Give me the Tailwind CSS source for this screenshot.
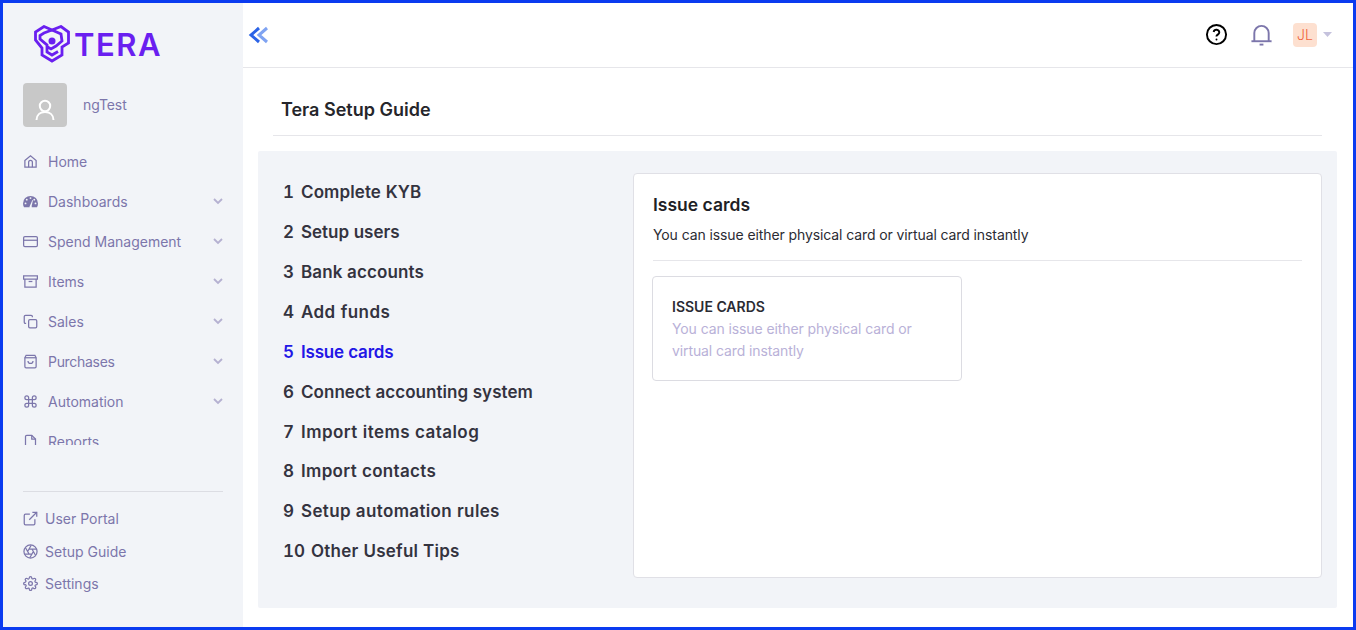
<!DOCTYPE html>
<html lang="en">
<head>
<meta charset="utf-8">
<title>Tera Setup Guide</title>
<script src="https://cdn.jsdelivr.net/npm/@tailwindcss/browser@4"></script>
</head>
<body class="font-['Inter',sans-serif]">
<div class="w-[1356px] h-[630px] border-[3px] border-[#0b3bf0] flex overflow-hidden bg-white">
  <aside class="w-[240px] h-full shrink-0 bg-[#f2f4f8] flex flex-col text-[14px] text-[#7c76ab]">
    <div class="h-[80px] shrink-0 pl-[31px] pt-[22px] flex items-start gap-[4px]">
      <svg class="w-[36px] h-[38px] shrink-0" viewBox="0 0 36 38" fill="none" stroke="#6a1ff0" stroke-width="2.800"><path d="M10 1.500 18 5 27 1.500 34.500 7V18L28 22V30L18 36 8 30V23L1.500 15V7Z"/><path d="M18 5 10 8 6 10.500V14L13 20V27L18 30 24 26.500"/><path d="M18 5 27 9 28 16 22 21 17 24 13.500 22"/><circle cx="18" cy="16" r="3.500" fill="#6a1ff0" stroke="none"/></svg>
      <span class="text-[31px] leading-[40px] font-semibold tracking-[1.5px] text-[#6a1ff0]">TERA</span>
    </div>
    <div class="h-[44px] shrink-0 ml-[20px] flex items-center gap-[16px]">
      <div class="w-[44px] h-[44px] rounded-[4px] bg-[#c8c8c8] flex items-end justify-center pb-[6px]">
        <svg class="w-[20px] h-[22px]" viewBox="0 0 20 22" fill="none" stroke="#fff" stroke-width="2"><circle cx="10" cy="7" r="5.200"/><path d="M1.500 21c0-5 3.500-8 8.500-8s8.500 3 8.500 8"/></svg>
      </div>
      <span class="pb-[2px] tracking-[-0.1px]">ngTest</span>
    </div>
    <nav class="mt-[14px] h-[304px] shrink-0 overflow-hidden">
      <a class="h-[40px] pl-[20px] pr-[19px] flex items-center gap-[10px]">
        <svg class="w-[15px] h-[15px] shrink-0" viewBox="0 0 24 24" fill="none" stroke="currentColor" stroke-width="2"><path d="M3 10.500 12 3l9 7.500V21H3Z"/><path d="M9 21v-8a3 3 0 0 1 6 0v8"/></svg>
        <span>Home</span>
      </a>
      <a class="h-[40px] pl-[20px] pr-[19px] flex items-center gap-[10px]">
        <svg class="w-[15px] h-[15px] shrink-0" viewBox="0 0 24 24" fill="currentColor"><path d="M12 3a12 12 0 0 0-12 12c0 2.200.6 4.300 1.600 6h20.800c1-1.700 1.600-3.800 1.600-6A12 12 0 0 0 12 3Z"/><g fill="#f2f4f8"><circle cx="12" cy="6.500" r="1.500"/><circle cx="6" cy="9" r="1.500"/><circle cx="18" cy="9" r="1.500"/><circle cx="4" cy="15" r="1.500"/><circle cx="20" cy="15" r="1.500"/><path d="M10.500 20 15 9.500l1 .4-2.300 9.600a2 2 0 1 1-3.200.5Z"/></g></svg>
        <span>Dashboards</span>
        <svg class="ml-auto w-[12px] h-[12px] text-[#b5b1d1]" viewBox="0 0 12 12" fill="none" stroke="currentColor" stroke-width="1.800"><path d="m2 4 4 4 4-4"/></svg>
      </a>
      <a class="h-[40px] pl-[20px] pr-[19px] flex items-center gap-[10px]">
        <svg class="w-[15px] h-[15px] shrink-0" viewBox="0 0 24 24" fill="none" stroke="currentColor" stroke-width="2"><rect x="1" y="4" width="22" height="16" rx="2"/><path d="M1 10h22"/></svg>
        <span>Spend Management</span>
        <svg class="ml-auto w-[12px] h-[12px] text-[#b5b1d1]" viewBox="0 0 12 12" fill="none" stroke="currentColor" stroke-width="1.800"><path d="m2 4 4 4 4-4"/></svg>
      </a>
      <a class="h-[40px] pl-[20px] pr-[19px] flex items-center gap-[10px]">
        <svg class="w-[15px] h-[15px] shrink-0" viewBox="0 0 24 24" fill="none" stroke="currentColor" stroke-width="2"><path d="M1 3h22v5H1Z"/><path d="M3 8v13h18V8"/><path d="M9 12h6"/></svg>
        <span>Items</span>
        <svg class="ml-auto w-[12px] h-[12px] text-[#b5b1d1]" viewBox="0 0 12 12" fill="none" stroke="currentColor" stroke-width="1.800"><path d="m2 4 4 4 4-4"/></svg>
      </a>
      <a class="h-[40px] pl-[20px] pr-[19px] flex items-center gap-[10px]">
        <svg class="w-[15px] h-[15px] shrink-0" viewBox="0 0 24 24" fill="none" stroke="currentColor" stroke-width="2"><rect x="9" y="9" width="13" height="13" rx="2"/><path d="M5 15H4a2 2 0 0 1-2-2V4a2 2 0 0 1 2-2h9a2 2 0 0 1 2 2v1"/></svg>
        <span>Sales</span>
        <svg class="ml-auto w-[12px] h-[12px] text-[#b5b1d1]" viewBox="0 0 12 12" fill="none" stroke="currentColor" stroke-width="1.800"><path d="m2 4 4 4 4-4"/></svg>
      </a>
      <a class="h-[40px] pl-[20px] pr-[19px] flex items-center gap-[10px]">
        <svg class="w-[15px] h-[15px] shrink-0" viewBox="0 0 24 24" fill="none" stroke="currentColor" stroke-width="2"><path d="M5 2h14l2 4v14a2 2 0 0 1-2 2H5a2 2 0 0 1-2-2V6Z"/><path d="M3 6h18"/><path d="M8 11a4 4 0 0 0 8 0"/></svg>
        <span class="tracking-[-0.3px]">Purchases</span>
        <svg class="ml-auto w-[12px] h-[12px] text-[#b5b1d1]" viewBox="0 0 12 12" fill="none" stroke="currentColor" stroke-width="1.800"><path d="m2 4 4 4 4-4"/></svg>
      </a>
      <a class="h-[40px] pl-[20px] pr-[19px] flex items-center gap-[10px]">
        <svg class="w-[15px] h-[15px] shrink-0" viewBox="0 0 24 24" fill="none" stroke="currentColor" stroke-width="2"><path d="M18 3a3 3 0 0 0-3 3v12a3 3 0 1 0 3-3H6a3 3 0 1 0 3 3V6a3 3 0 1 0-3 3h12a3 3 0 0 0 0-6Z"/></svg>
        <span>Automation</span>
        <svg class="ml-auto w-[12px] h-[12px] text-[#b5b1d1]" viewBox="0 0 12 12" fill="none" stroke="currentColor" stroke-width="1.800"><path d="m2 4 4 4 4-4"/></svg>
      </a>
      <a class="h-[40px] pl-[20px] pr-[19px] flex items-center gap-[10px]">
        <svg class="w-[15px] h-[15px] shrink-0" viewBox="0 0 24 24" fill="none" stroke="currentColor" stroke-width="2"><path d="M14 2H6a2 2 0 0 0-2 2v16a2 2 0 0 0 2 2h12a2 2 0 0 0 2-2V8Z"/><path d="M14 2v6h6"/></svg>
        <span>Reports</span>
      </a>
    </nav>
    <div class="mt-[46px] mx-[20px] border-t border-[#dcdde3]"></div>
    <div class="mt-[10px] mx-[20px] flex flex-col">
      <a class="h-[33px] flex items-center gap-[7px]">
        <svg class="w-[15px] h-[15px] shrink-0" viewBox="0 0 24 24" fill="none" stroke="currentColor" stroke-width="2"><path d="M19 13v7a2 2 0 0 1-2 2H4a2 2 0 0 1-2-2V7a2 2 0 0 1 2-2h7"/><path d="M15 2h7v7"/><path d="M10 14 22 2"/></svg>
        <span>User Portal</span>
      </a>
      <a class="h-[32px] flex items-center gap-[7px]">
        <svg class="w-[15px] h-[15px] shrink-0" viewBox="0 0 24 24" fill="none" stroke="currentColor" stroke-width="2"><circle cx="12" cy="12" r="10.500"/><path d="m14.300 8 5.700 9.900M9.700 8h11.500M7.400 12l5.700-9.900M9.700 16 4 6.100M14.300 16H2.800M16.600 12l-5.700 9.900"/></svg>
        <span>Setup Guide</span>
      </a>
      <a class="h-[33px] flex items-center gap-[7px]">
        <svg class="w-[15px] h-[15px] shrink-0" viewBox="0 0 24 24" fill="none" stroke="currentColor" stroke-width="2"><circle cx="12" cy="12" r="3"/><path d="M19.400 15a1.650 1.650 0 0 0 .33 1.820l.06.06a2 2 0 1 1-2.830 2.830l-.06-.06a1.650 1.650 0 0 0-2.820 1.170V21a2 2 0 1 1-4 0v-.09a1.650 1.650 0 0 0-2.820-1.170l-.06.06a2 2 0 1 1-2.830-2.830l.06-.06A1.650 1.650 0 0 0 3.090 14H3a2 2 0 1 1 0-4h.09a1.650 1.650 0 0 0 1.170-2.820l-.06-.06a2 2 0 1 1 2.830-2.830l.06.06A1.650 1.650 0 0 0 10 3.090V3a2 2 0 1 1 4 0v.09a1.650 1.650 0 0 0 2.820 1.170l.06-.06a2 2 0 1 1 2.830 2.830l-.06.06A1.650 1.650 0 0 0 20.910 10H21a2 2 0 1 1 0 4h-.09a1.650 1.650 0 0 0-1.510 1Z"/></svg>
        <span>Settings</span>
      </a>
    </div>
  </aside>

  <main class="flex-1 min-w-0 flex flex-col">
    <header class="h-[65px] shrink-0 border-b border-[#e6e6ea] flex items-center pl-[5px] pr-[21px] pb-[1px]">
      <svg class="w-[22px] h-[20px]" viewBox="0 0 22 20" fill="none" stroke-width="3"><path d="M11 3 3 10l8 7" stroke="#2b63e6"/><path d="M19 3l-8 7 8 7" stroke="#7fa3f2"/></svg>
      <svg class="ml-auto w-[23px] h-[23px]" viewBox="0 0 24 24" fill="none" stroke="#000" stroke-width="2"><circle cx="12" cy="12" r="10"/><path d="M9 9.300a3 3 0 0 1 5.900.7c0 2-3 2.200-3 4"/><circle cx="12" cy="17.300" r="1" fill="#000" stroke="none"/></svg>
      <svg class="ml-[22px] w-[23px] h-[24px]" viewBox="0 0 24 24" fill="none" stroke="#7c76ab" stroke-width="2"><path d="M1.500 18.500h21"/><path d="M4.500 18.500V10a7.500 7.500 0 0 1 15 0v8.500"/><path d="M10 22h4"/></svg>
      <div class="ml-[20px] w-[24px] h-[24px] rounded-[4px] bg-[#fde0d0] flex items-center justify-center text-[14px] font-light text-[#f0653f]">JL</div>
      <svg class="ml-[6px] w-[9px] h-[5px]" viewBox="0 0 9 5" fill="#c5c2dd"><path d="M0 0h9L4.500 5Z"/></svg>
    </header>
    <div class="flex-1 min-h-0 flex flex-col pl-[15px] pr-[16px]">
      <div class="mx-[15px] h-[68px] border-b border-[#e6e6ea] flex items-center pl-[8px] pt-[15px] text-[18px] font-semibold text-[#26262b] shrink-0">Tera Setup Guide</div>
      <section class="mt-[15px] h-[457px] bg-[#f2f4f8] flex rounded-[2px] pl-[25px] pr-[15px] pt-[22px] pb-[30px]">
        <ol class="w-[350px] shrink-0 text-[17px] font-semibold text-[#34333f] tabular-nums">
          <li class="h-[39.900px] flex items-center gap-[7px]"><span class="min-w-[11px]">1</span><span class="tracking-[0.1px]">Complete KYB</span></li>
          <li class="h-[39.900px] flex items-center gap-[7px]"><span class="min-w-[11px]">2</span><span>Setup users</span></li>
          <li class="h-[39.900px] flex items-center gap-[7px]"><span class="min-w-[11px]">3</span><span class="tracking-[0.1px]">Bank accounts</span></li>
          <li class="h-[39.900px] flex items-center gap-[7px]"><span class="min-w-[11px]">4</span><span class="tracking-[0.45px]">Add funds</span></li>
          <li class="h-[39.900px] flex items-center gap-[7px] text-[#2216e6]"><span class="min-w-[11px]">5</span><span class="tracking-[-0.2px]">Issue cards</span></li>
          <li class="h-[39.900px] flex items-center gap-[7px]"><span class="min-w-[11px]">6</span><span class="tracking-[0.04px]">Connect accounting system</span></li>
          <li class="h-[39.900px] flex items-center gap-[7px]"><span class="min-w-[11px]">7</span><span class="tracking-[0.45px]">Import items catalog</span></li>
          <li class="h-[39.900px] flex items-center gap-[7px]"><span class="min-w-[11px]">8</span><span class="tracking-[0.33px]">Import contacts</span></li>
          <li class="h-[39.900px] flex items-center gap-[7px]"><span class="min-w-[11px]">9</span><span class="tracking-[0.36px]">Setup automation rules</span></li>
          <li class="h-[39.900px] flex items-center gap-[6px]"><span class="min-w-[11px]">10</span><span class="tracking-[0.25px]">Other Useful Tips</span></li>
        </ol>
        <div class="flex-1 min-w-0 bg-white border border-[#e0e0e6] rounded-[4px] px-[19px] pt-[20px]">
          <h2 class="text-[17.500px] leading-[22px] font-semibold text-[#1f1f26]">Issue cards</h2>
          <p class="mt-[8px] text-[14px] leading-[22px] tracking-[-0.1px] text-[#2b2b33] pb-[14px] border-b border-[#e6e6ea]">You can issue either physical card or virtual card instantly</p>
          <div class="mt-[15px] w-[310px] h-[105px] border border-[#dcdce2] rounded-[4px] -ml-px pl-[19px] pr-[20px] pt-[19px]">
            <h3 class="text-[14px] leading-[22px] font-semibold text-[#2b2b33]">ISSUE CARDS</h3>
            <p class="text-[14px] leading-[22px] tracking-[-0.1px] text-[#b9b1d8]">You can issue either physical card or virtual card instantly</p>
          </div>
        </div>
      </section>
    </div>
  </main>
</div>
</body>
</html>
